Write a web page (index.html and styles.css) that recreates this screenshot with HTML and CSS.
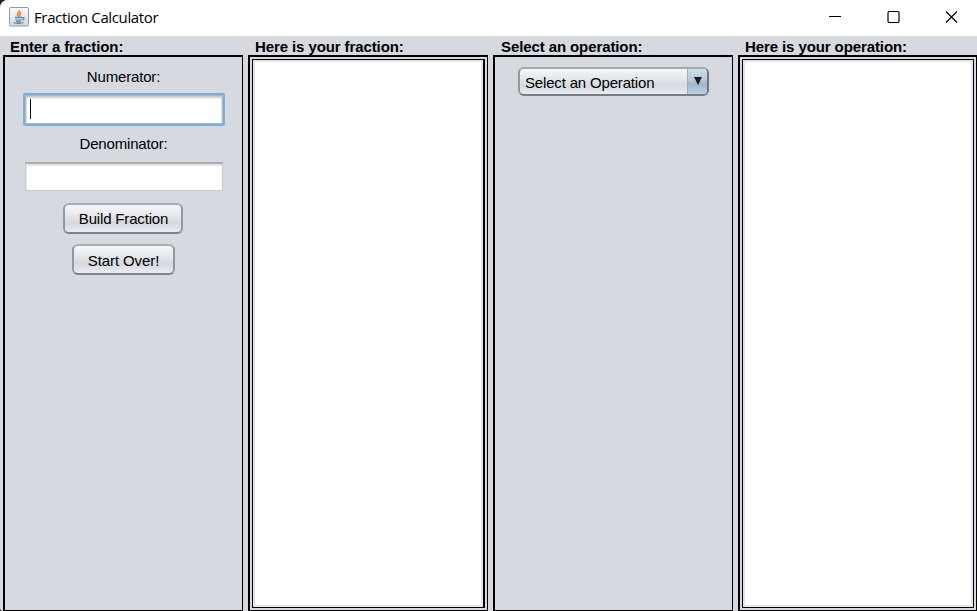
FILE: index.html
```html
<!DOCTYPE html>
<html lang="en">
<head>
<meta charset="utf-8">
<title>Fraction Calculator</title>
<link rel="stylesheet" href="styles.css">
</head>
<body>
<div class="window">
  <header class="titlebar">
    <svg class="app-icon" width="20" height="20" viewBox="0 0 20 20">
      <defs><linearGradient id="tile" x1="0" y1="0" x2="0" y2="1"><stop offset="0" stop-color="#fafafa"/><stop offset="1" stop-color="#d3d8dc"/></linearGradient></defs>
      <rect x=".5" y=".5" width="19" height="18.5" rx="1.5" fill="url(#tile)" stroke="#8d9ba8"/>
      <path d="M10.500 3c1 2-3.400 3-1.700 5.200L10 9.500M12.200 5.500c-2.700 1.300-1.200 2.200-1.500 4" fill="none" stroke="#e48742" stroke-width="1.700"/>
      <path d="M6 10.500h7M6.500 12.500c1.500.7 4.500.7 6 0M7 14.300c1.500.6 3.500.6 5 0M13 10.700c2.800-.7 2.600 1.800.2 2.500M4.500 15.500c2.500 1.300 7.500 1.300 10 0" fill="none" stroke="#5b87a8" stroke-width="1.300"/>
    </svg>
    <h1 class="title">Fraction Calculator</h1>
    <div class="controls">
      <svg width="13" height="14" viewBox="0 0 13 14"><path d="M1 6.500h12" stroke="#000"/></svg>
      <svg width="13" height="14" viewBox="0 0 13 14"><rect x="1" y="1.500" width="11" height="11" rx="1.300" fill="none" stroke="#000" stroke-width="1.200"/></svg>
      <svg width="13" height="14" viewBox="0 0 13 14"><path d="M1 1.500l11 11M12 1.500l-11 11" stroke="#000" stroke-width="1.200"/></svg>
    </div>
  </header>
  <main class="columns">
    <section class="column">
      <h2 class="heading">Enter a fraction:</h2>
      <div class="panel form">
        <label class="label">Numerator:</label>
        <div class="field focused"><span class="caret"></span></div>
        <label class="label second">Denominator:</label>
        <div class="field plain"></div>
        <button class="button build">Build Fraction</button>
        <button class="button reset">Start Over!</button>
      </div>
    </section>
    <section class="column">
      <h2 class="heading">Here is your fraction:</h2>
      <div class="panel output"><div class="area thick"></div></div>
    </section>
    <section class="column">
      <h2 class="heading select">Select an operation:</h2>
      <div class="panel form">
        <div class="combo"><span class="combo-text">Select an Operation</span><span class="combo-arrow"><svg width="8" height="8" viewBox="0 0 8 8"><path d="M0 0h8L4 8z" fill="#1c1c1c"/></svg></span></div>
      </div>
    </section>
    <section class="column last">
      <h2 class="heading">Here is your operation:</h2>
      <div class="panel output"><div class="area"></div></div>
    </section>
  </main>
</div>
</body>
</html>
```
FILE: styles.css
```css
* { box-sizing: border-box; }
body { margin: 0; background: #222; overflow: hidden; font: 15px "Liberation Sans", Arial, sans-serif; color: #000; }
.window { width: 977px; height: 611px; display: flex; flex-direction: column; background: #d6d9e0; border-radius: 8px 0 0 3px; overflow: hidden; }
.titlebar { height: 36px; flex: none; background: #fff; display: flex; align-items: center; padding: 0 19px 0 9px; }
.app-icon { margin-top: -3px; }
.title { margin: -2px 0 0 5px; font: 15px "Open Sans", "Noto Sans", sans-serif; letter-spacing: -.37px; white-space: nowrap; }
.controls { margin-left: auto; display: flex; gap: 45.500px; margin-top: -3px; }
.columns { flex: 1; display: flex; gap: 5px; padding-left: 3px; }
.column { width: 240px; flex: none; display: flex; flex-direction: column; }
.column.last { width: 239px; }
.heading { margin: 0; height: 19px; padding-left: 7px; font-size: 15px; line-height: 22px; font-weight: 700; letter-spacing: -.1px; white-space: nowrap; }
.heading.select { padding-left: 8px; }
.panel { flex: 1; border: solid #000; border-width: 2px 1px 1px 2px; }
.form { display: flex; flex-direction: column; align-items: center; letter-spacing: -.17px; }
.output { padding: 2px; display: flex; }
.area { flex: 1; background: #fff; border: 1px solid #000; box-shadow: inset 0 0 0 2px #e2e4e9; }
.area.thick { border-right-width: 2px; }
.label { height: 20px; line-height: 20px; margin-top: 10px; }
.label.second { margin-top: 8px; }
.field { background: #fff; }
.focused { width: 202px; height: 33px; margin-top: 6px; border: 2px solid #7fabd5; border-radius: 2px; padding: 4px 5px; box-shadow: inset 0 0 0 1px #a9bccd, inset 0 3px 2px #c9cbce, inset 2px 0 1px #dcdfe3, inset -2px 0 1px #dcdfe3; }
.caret { display: block; width: 1px; height: 20px; background: #000; }
.plain { width: 198px; height: 29px; margin: 8px 0 1px; border: 1px solid #c9cbd0; border-top: 2px solid #a9abb0; box-shadow: inset 0 2px 1px #e6e6e8, inset 1px 0 1px #e6e6e8; }
.button { font: inherit; letter-spacing: inherit; color: #000; padding: 0; height: 31px; border: 2px solid; border-color: #a9acb2 #94979d #7e8187; border-radius: 6px; background: linear-gradient(#f6f7f9, #e2e4e8 45%, #d5d8df 65%, #e9ecf4); white-space: nowrap; }
.build { width: 120px; margin: 11px 1px 0 0; padding-left: 1px; }
.reset { width: 103px; margin-top: 10px; padding-top: 2px; letter-spacing: -.1px; }
.combo { width: 191px; height: 29px; margin-top: 10px; border: 2px solid; border-color: #a5a8ae #64788b #787d85 #96999f; border-radius: 6px; display: flex; overflow: hidden; background: linear-gradient(#f6f7f9, #e2e4e8 45%, #d6d9e0 65%, #e9ecf2); }
.combo-text { flex: 1; padding-left: 5px; line-height: 27px; }
.combo-arrow { width: 20px; display: flex; align-items: center; justify-content: center; padding-bottom: 1px; border-left: 1px solid #9badbf; background: linear-gradient(#d0dde8, #b5c8d9 45%, #9fb6cb 60%, #bdd2e3); }
```
